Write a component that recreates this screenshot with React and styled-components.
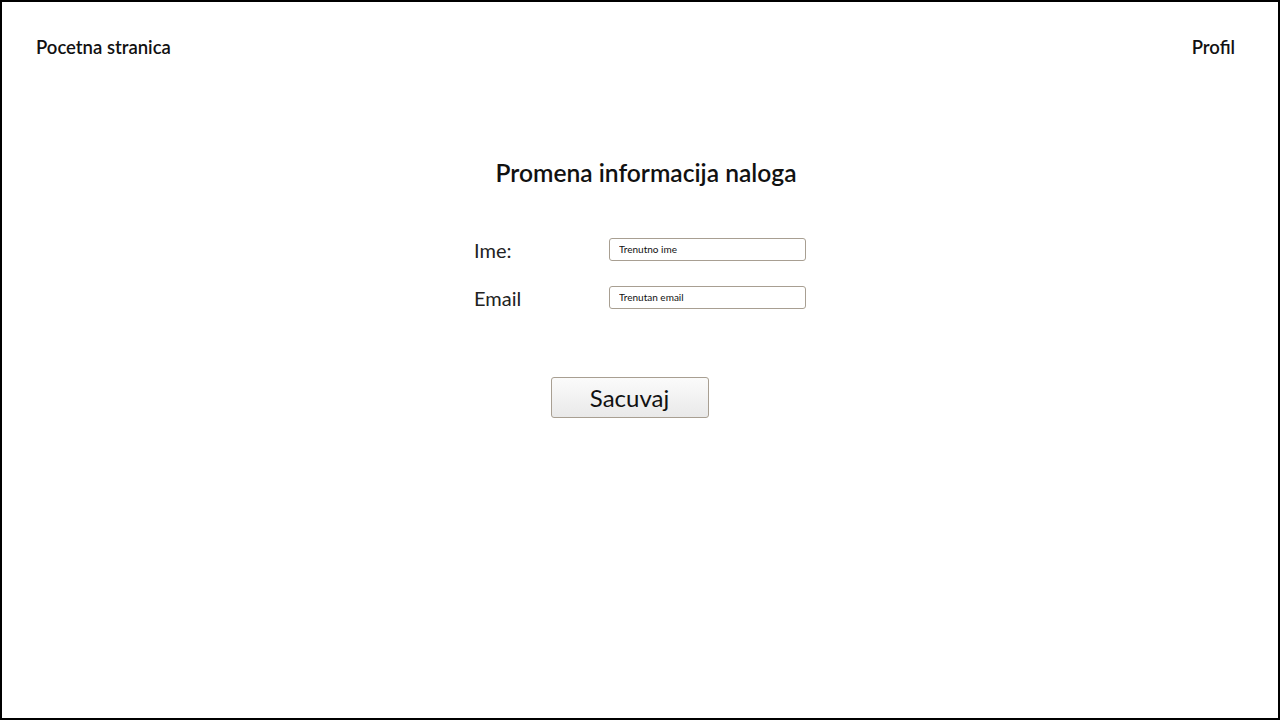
import React from 'react';
import styled, { createGlobalStyle } from 'styled-components';

const GlobalStyle = createGlobalStyle`
  * { box-sizing: border-box; }
  body {
    margin: 0;
    background: #ffffff;
    font-family: Lato, "Open Sans", sans-serif;
    color: #111111;
  }
`;

const App = () => {
  return (
    <>
      <GlobalStyle />
      <Page>
        <Header>
          <NavLink href="#home">Pocetna stranica</NavLink>
          <NavLink href="#profil">Profil</NavLink>
        </Header>

        <Main>
          <Title>Promena informacija naloga</Title>

          <Form>
            <Row>
              <Label>Ime:</Label>
              <Input type="text" placeholder="Trenutno ime" />
            </Row>
            <Row>
              <Label>Email</Label>
              <Input type="text" placeholder="Trenutan email" />
            </Row>
          </Form>

          <SaveButton type="button">Sacuvaj</SaveButton>
        </Main>
      </Page>
    </>
  );
};

export default App;

const Page = styled.div`
  width: 1280px;
  height: 720px;
  border: 2px solid #000000;
  display: flex;
  flex-direction: column;
`;

const Header = styled.header`
  display: flex;
  justify-content: space-between;
  align-items: center;
  padding: 33px 43px 0 34px;
`;

const NavLink = styled.a`
  font-size: 18.5px;
  line-height: 24px;
  font-weight: 600;
  color: #111111;
  text-decoration: none;
`;

const Main = styled.main`
  display: flex;
  flex-direction: column;
  align-items: center;
  padding-top: 99px;
`;

const Title = styled.h1`
  margin: 0;
  padding-left: 12px;
  font-size: 24.6px;
  line-height: 30px;
  font-weight: 600;
  color: #111111;
`;

const Form = styled.div`
  width: 332px;
  margin-top: 48px;
  display: flex;
  flex-direction: column;
  gap: 24px;
`;

const Row = styled.div`
  display: grid;
  grid-template-columns: 135px 197px;
  align-items: center;
  height: 24px;
`;

const Label = styled.label`
  font-size: 20px;
  line-height: 24px;
  color: #222222;
  padding-top: 2px;
`;

const Input = styled.input`
  width: 197px;
  height: 23px;
  border: 1px solid #a89f92;
  border-radius: 3px;
  padding: 0 9px;
  font-family: Lato, sans-serif;
  font-size: 10px;
  color: #111111;
  outline: none;

  &::placeholder {
    color: #111111;
  }
`;

const SaveButton = styled.button`
  margin-top: 69px;
  margin-right: 21px;
  width: 158px;
  height: 41px;
  border: 1px solid #a89f92;
  border-radius: 3px;
  background: linear-gradient(#fbfbfb, #e9e9e9);
  font-family: Lato, sans-serif;
  font-size: 24px;
  color: #111111;
  cursor: pointer;
`;
